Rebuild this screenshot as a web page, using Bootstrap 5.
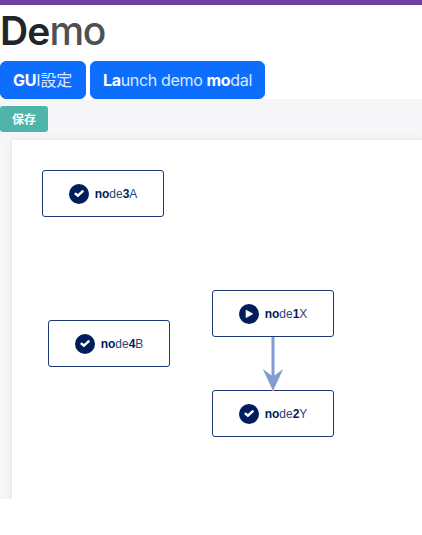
<!DOCTYPE html>
<html lang="ja">
<head>
<meta charset="utf-8">
<meta name="viewport" content="width=device-width, initial-scale=1">
<title>Demo</title>
<link href="https://cdn.jsdelivr.net/npm/bootstrap@5.3.0/dist/css/bootstrap.min.css" rel="stylesheet">
<style>
  body { font-family: Inter, "Noto Sans CJK JP", sans-serif; overflow: hidden; }
  .topline { height: 5px; background: #7040a0; }
  .title { font-size: 39px; line-height: 48px; height: 48px; margin: 2px 0 6px; color: #4d5154; font-weight: 500; letter-spacing: -1.3px; }
  .title b { color: #212529; font-weight: 600; letter-spacing: -.9px; }
  .actions { gap: 4px; height: 38px; }
  .actions .btn { white-space: nowrap; padding-left: 0; padding-right: 0; color: #dbe9ff; letter-spacing: -.22px; }
  .actions b { color: #fff; }
  .actions .btn-gui { width: 86px; padding-right: 1px; }
  .actions .btn-launch { width: 175px; letter-spacing: -.33px; }
  .editor { height: 400px; background: #f6f6f9; padding: 7px 0 0; overflow: hidden; }
  .btn-save { width: 48px; height: 26px; background: #4fb4a9; color: #fff; font-size: 12px; line-height: 28px; border-radius: 3px; }
  .board { height: 370px; margin: 8px 0 0 12px; background: #fff; box-shadow: 0 0 10px rgba(0,0,0,.06), 0 0 2px rgba(0,0,0,.08); }
  .flow-node { width: 122px; height: 47px; border: 1px solid #1c3876; border-radius: 3px; background: #fff; color: #2f4377; font: 12px "Liberation Sans", Arial, sans-serif; gap: 6px; }
  .flow-node b { color: #001d5c; }
  .n3 { left: 30px; top: 30px; }
  .n4 { left: 36px; top: 180px; }
  .n1 { left: 200px; top: 150px; }
  .n2 { left: 200px; top: 250px; }
  .link-arrow { left: 250px; top: 197px; }
  .link-end { left: 260px; top: 250px; width: 2px; height: 1px; background: #c98a5a; }
</style>
<script src="https://cdn.jsdelivr.net/npm/bootstrap@5.3.0/dist/js/bootstrap.bundle.min.js"></script>
</head>
<body>
<svg class="d-none">
  <symbol id="check" viewBox="0 0 20 20"><circle cx="10" cy="10" r="10" fill="#001d5c"/><path d="M6.6 9.8 8.9 11.7 13.6 7.3" fill="none" stroke="#fff" stroke-width="2.5" stroke-linecap="round"/></symbol>
  <symbol id="play" viewBox="0 0 20 20"><circle cx="10" cy="10" r="10" fill="#001d5c"/><path d="M7.1 6.2 13.7 9.9 7.1 13.6Z" fill="#fff" stroke="#fff" stroke-width=".8" stroke-linejoin="round"/></symbol>
</svg>
<div class="topline"></div>
<h1 class="title"><b>De</b>mo</h1>
<div class="actions d-flex">
  <button type="button" class="btn btn-primary btn-gui"><b>GU</b>I設定</button>
  <button type="button" class="btn btn-primary btn-launch"><b>La</b>unch demo <b>mo</b>dal</button>
</div>
<main class="editor">
  <button type="button" class="btn btn-save border-0 p-0 fw-bold d-block">保存</button>
  <div class="board position-relative">
    <svg class="link-arrow position-absolute" width="22" height="54" viewBox="0 0 22 54"><path d="M11 0V42" stroke="#829bd0" stroke-width="3"/><path d="M.8 32 11 39.5 21.2 32 11 54Z" fill="#829bd0"/></svg>
    <div class="flow-node n3 position-absolute d-flex align-items-center justify-content-center"><svg width="20" height="20"><use href="#check"/></svg><span><b>no</b>de<b>3</b>A</span></div>
    <div class="flow-node n4 position-absolute d-flex align-items-center justify-content-center"><svg width="20" height="20"><use href="#check"/></svg><span><b>no</b>de<b>4</b>B</span></div>
    <div class="flow-node n1 position-absolute d-flex align-items-center justify-content-center"><svg width="20" height="20"><use href="#play"/></svg><span><b>no</b>de<b>1</b>X</span></div>
    <div class="flow-node n2 position-absolute d-flex align-items-center justify-content-center"><svg width="20" height="20"><use href="#check"/></svg><span><b>no</b>de<b>2</b>Y</span></div>
    <span class="link-end position-absolute"></span>
  </div>
</main>
</body>
</html>
